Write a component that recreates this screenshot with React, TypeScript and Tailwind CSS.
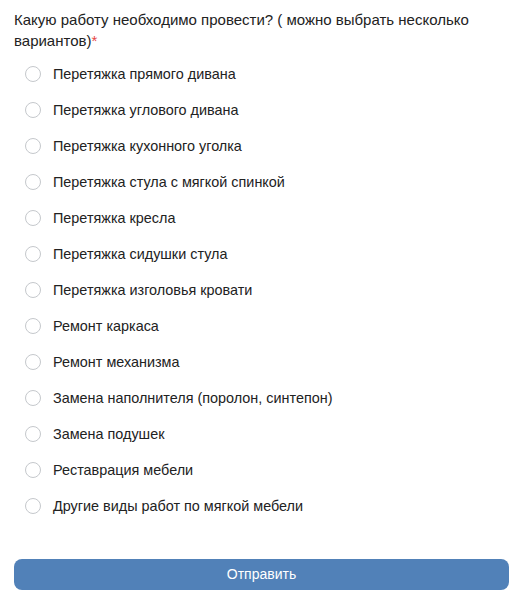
import { useState } from 'react';

const options = [
  'Перетяжка прямого дивана',
  'Перетяжка углового дивана',
  'Перетяжка кухонного уголка',
  'Перетяжка стула с мягкой спинкой',
  'Перетяжка кресла',
  'Перетяжка сидушки стула',
  'Перетяжка изголовья кровати',
  'Ремонт каркаса',
  'Ремонт механизма',
  'Замена наполнителя (поролон, синтепон)',
  'Замена подушек',
  'Реставрация мебели',
  'Другие виды работ по мягкой мебели',
];

export default function App() {
  const [selected, setSelected] = useState<string[]>([]);

  const toggle = (o: string) =>
    setSelected((s) => (s.includes(o) ? s.filter((x) => x !== o) : [...s, o]));

  return (
    <div className="min-h-[603px] w-[519px] bg-white pl-[14px] pr-[10px] pt-[9px] font-['Liberation_Sans',Arial,sans-serif] text-[#222]">
      <p className="text-[15px] leading-[21px]">
        Какую работу необходимо провести? ( можно выбрать несколько вариантов)<span className="text-[#e64646]">*</span>
      </p>

      <div className="mt-[5px] flex flex-col">
        {options.map((o) => (
          <label key={o} className="flex h-[36px] cursor-pointer items-center gap-[12px] pl-[11px]">
            <span
              onClick={() => toggle(o)}
              className="flex h-[16px] w-[16px] shrink-0 items-center justify-center rounded-full border border-[#c5c8cc] bg-white"
            >
              {selected.includes(o) && <span className="h-[8px] w-[8px] rounded-full bg-[#5181b8]" />}
            </span>
            <span className="text-[14.4px] leading-[18px]">{o}</span>
          </label>
        ))}
      </div>

      <button
        type="button"
        className="mt-[35px] h-[31px] w-full rounded-[8px] bg-[#5181b8] text-[14px] text-white"
      >
        Отправить
      </button>
    </div>
  );
}
